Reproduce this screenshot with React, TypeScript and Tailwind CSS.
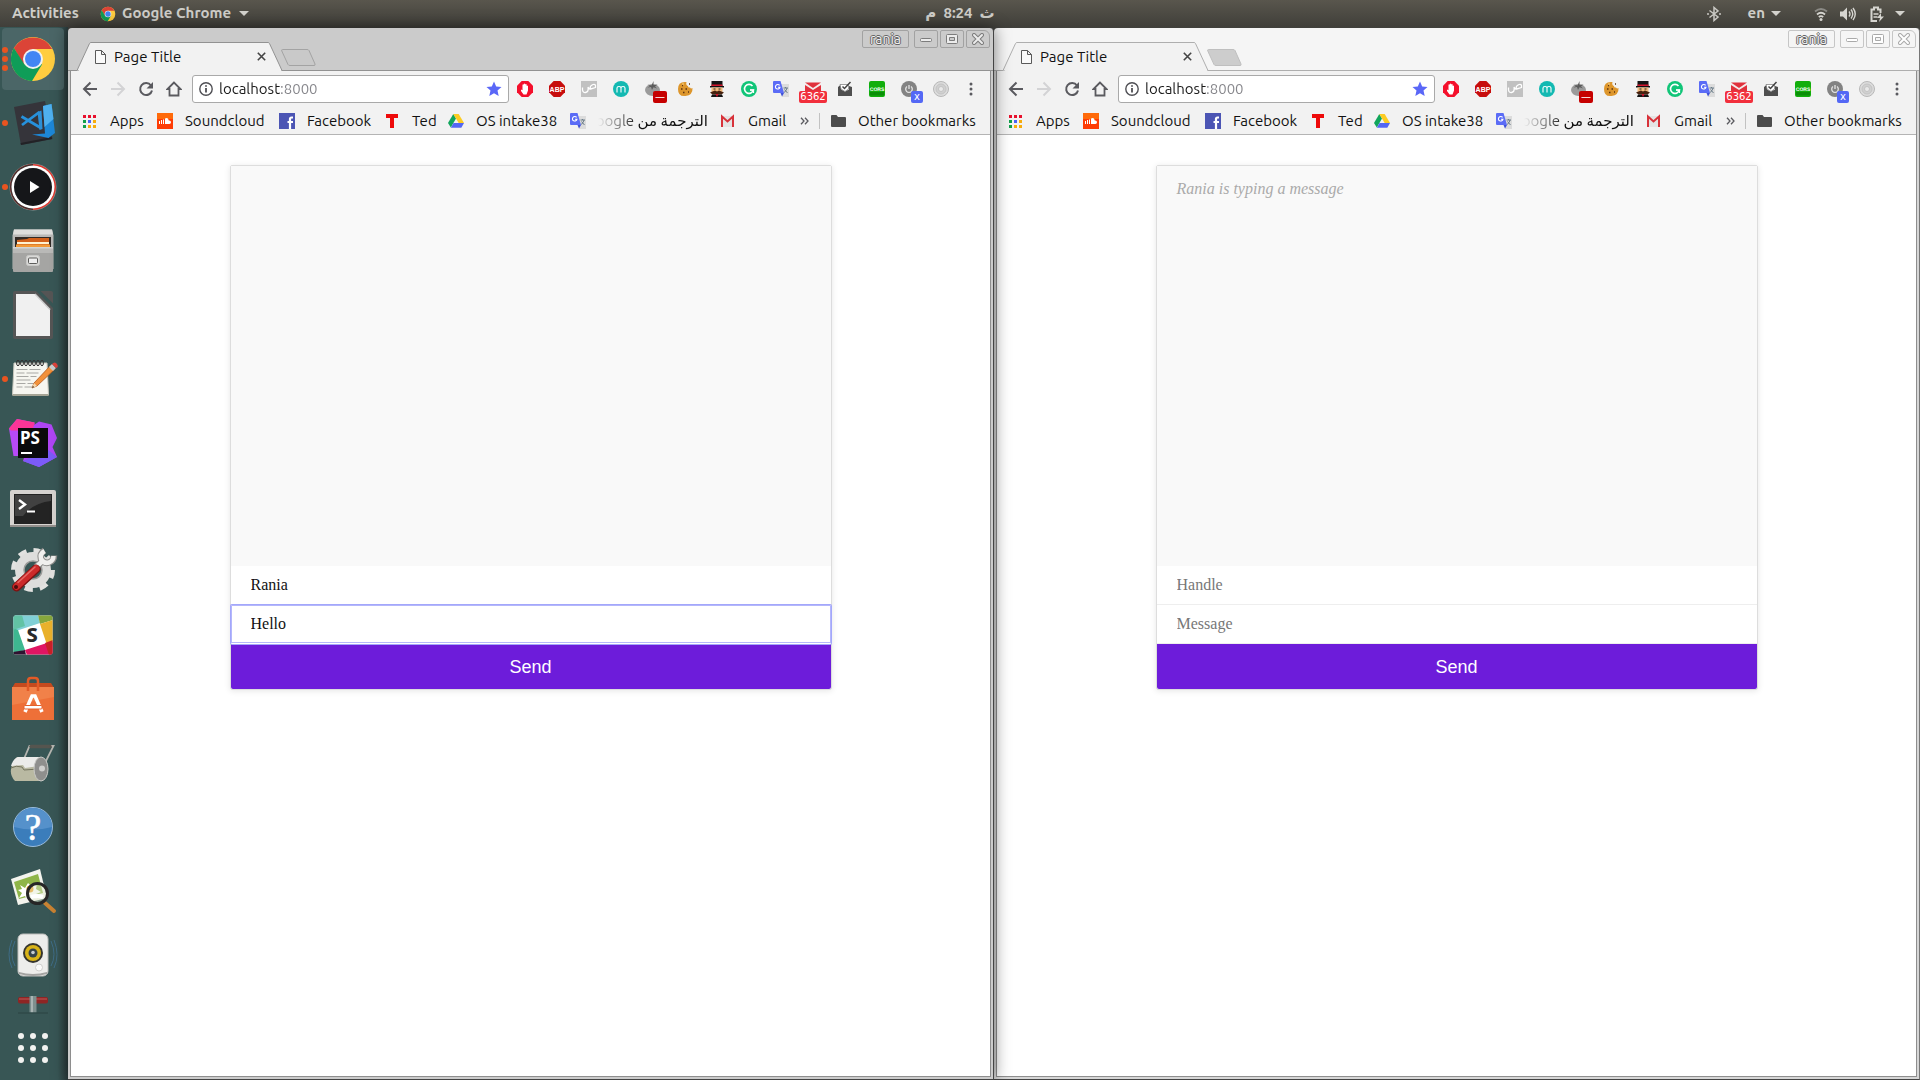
import React, { useState } from "react";

const UI = "font-['Ubuntu','Noto_Sans','DejaVu_Sans',sans-serif]";

/* ---------- shared marks ---------- */

function ChromeMark({ className }: { className?: string }) {
  return (
    <svg viewBox="0 0 48 48" className={className} aria-hidden="true">
      <circle cx="24" cy="24" r="22" fill="#ffcd40" />
      <path d="M4.9 13A22 22 0 0 1 43.1 14H24L14.5 29.5Z" fill="#db4437" />
      <path d="M4.9 13A22 22 0 0 0 23 46L33 29.5 24 24 15.5 29.5Z" fill="#0f9d58" />
      <circle cx="24" cy="24" r="10" fill="#f1f1f1" />
      <circle cx="24" cy="24" r="8" fill="#4285f4" />
    </svg>
  );
}

function Caret() {
  return (
    <svg viewBox="0 0 10 5" className="h-[5px] w-[10px]" aria-hidden="true">
      <path d="M0 0h10L5 5z" fill="#d3d2cd" />
    </svg>
  );
}

function TranslateMark() {
  return (
    <svg viewBox="0 0 16 16" className="size-4" aria-hidden="true">
      <path d="M6 3h10v13H9z" fill="#dcdcdc" />
      <path d="M0 1q0-1 1-1h6.5L11 12H1q-1 0-1-1z" fill="#5b6cf6" />
      <path d="M7.5 12H11l-2 3.5z" fill="#3f51d8" />
      <path d="M6.6 4.400A2.300 2.300 0 1 0 7 6.200H5" fill="none" stroke="#fff" strokeWidth="1.1" />
      <path d="M10.5 7h4.500M12.500 6v1M14 7q-.5 3-3 4.500M11.500 8.500l3 3.500" fill="none" stroke="#6b7d8a" />
    </svg>
  );
}

/* ---------- top panel ---------- */

function TopPanel() {
  return (
    <header className={`grid h-[27px] shrink-0 grid-cols-[1fr_auto_1fr] items-center bg-linear-to-b from-[#59564d] to-[#403f3a] text-[15px] font-semibold text-[#cfcec9] ${UI}`}>
      <div className="flex items-center pl-3">
        <button className="w-[88px] text-left">Activities</button>
        <button className="flex items-center gap-[6px]">
          <ChromeMark className="size-4" />
          <span className="w-[111px] text-left whitespace-nowrap">Google Chrome</span>
          <Caret />
        </button>
      </div>
      <button dir="rtl" className="whitespace-pre">ث  8:24  م</button>
      <div className="flex items-center justify-end pr-[15px]">
        <svg viewBox="0 0 16 16" className="mr-[26px] size-4" aria-label="Bluetooth">
          <path d="M3.500 4.500l8.500 6.500-4 3.500V1.500l4 3.500-8.500 6.500M1 8h2M13 8h2" fill="none" stroke="#c9c8c3" strokeWidth="1.500" />
        </svg>
        <button className="mr-[32px] flex items-center gap-[6px]">
          en <Caret />
        </button>
        <button className="flex items-center" aria-label="System menu">
          <svg viewBox="0 0 16 16" className="mr-[11px] size-4" aria-hidden="true">
            <path d="M2 5.500q6-5 12 0" fill="none" stroke="#8b8a85" strokeWidth="1.800" />
            <path d="M4 8.500q4-3.500 8 0M5.800 11q2.200-1.800 4.400 0" fill="none" stroke="#d6d5d0" strokeWidth="1.800" />
            <circle cx="8" cy="13.500" r="1.500" fill="#d6d5d0" />
          </svg>
          <svg viewBox="0 0 16 16" className="mr-[13px] size-4" aria-hidden="true">
            <path d="M0 5.500h3l4-4v13l-4-4H0z" fill="#d6d5d0" />
            <path d="M9 5.500q2 2.500 0 5M11 3.500q3.500 4.500 0 9M13 2q4.500 6 0 12" fill="none" stroke="#d6d5d0" strokeWidth="1.400" />
          </svg>
          <svg viewBox="0 0 16 16" className="mr-[10px] size-4" aria-hidden="true">
            <path d="M8 15H2.500V3.500H5v-2h4v2h2.500V7" fill="none" stroke="#d6d5d0" strokeWidth="2" />
            <path d="M4.500 8h5M4.500 11h4" stroke="#d6d5d0" strokeWidth="1.600" />
            <path d="M12 7l-4 5h3l-1 4 5-5.500h-3z" fill="#d6d5d0" />
          </svg>
          <Caret />
        </button>
      </div>
    </header>
  );
}

/* ---------- dock ---------- */

const dockApps: { name: string; dots: number; art: React.ReactNode }[] = [
  { name: "Google Chrome", dots: 3, art: <ChromeMark className="size-12" /> },
  {
    name: "Visual Studio Code", dots: 1,
    art: (
      <>
        <path d="M5 8L36 2l7.500 38L12 46z" fill="#35343a" />
        <path d="M43 40l-31 6-.5-2 31-6z" fill="#222226" />
        <path d="M34 7l8.500-2L46 34l-6.500 5L23 35.500l13-1z" fill="#1d87d6" />
        <path d="M34 7l8.500-2 2 15-9 8z" fill="#4fb0ee" />
        <path d="M12.500 17.500L32 29M13 26L30.500 13" stroke="#2691dc" strokeWidth="2.800" />
        <path d="M28.500 13l4-1.500L33.500 30l-3 1z" fill="#2c8fd5" />
      </>
    ),
  },
  {
    name: "Music player", dots: 1,
    art: (
      <>
        <circle cx="24" cy="24" r="23.500" fill="#8d9a99" />
        <circle cx="24" cy="24" r="23" fill="#e0392f" />
        <path d="M24 1a23 23 0 0 0 0 46z" fill="#47302f" />
        <circle cx="24" cy="24" r="21.500" fill="#fff" />
        <circle cx="24" cy="24" r="19" fill="#151619" />
        <path d="M21 18l9.500 6-9.500 6z" fill="#fff" />
      </>
    ),
  },
  {
    name: "Files", dots: 0,
    art: (
      <>
        <path d="M5 2.500h38l1.500 6V42h-41V8.500z" fill="#b9b9b7" />
        <path d="M5 2.500h38l1 5H4z" fill="#dededc" />
        <path d="M6 10h36v10H6z" fill="#312a26" />
        <path d="M8 13l10-1 2-1h20v9H8z" fill="#d2601a" />
        <path d="M8 15h32v2H8z" fill="#fff1cf" />
        <path d="M7 17.500h34V20H7z" fill="#f29a38" />
        <rect x="4" y="20" width="40" height="25" rx="1" fill="#a5a5a3" />
        <path d="M4 20h40v6H4z" fill="#b9b9b7" />
        <path d="M4 20h40v1.500H4z" fill="#d5d5d3" />
        <rect x="17.500" y="28.500" width="13" height="10" rx="2" fill="#d9d9d7" stroke="#c9c9c7" />
        <rect x="19.500" y="31" width="9" height="5.500" rx="1" fill="#eee" stroke="#5d5d5b" />
      </>
    ),
  },
  {
    name: "LibreOffice", dots: 0,
    art: (
      <>
        <path d="M6 0h21l17 17v29q0 2-2 2H6q-2 0-2-2V2q0-2 2-2z" fill="#555" />
        <path d="M7 3h19l15 15.500V45H7z" fill="#f0f0f0" />
        <path d="M26 3l15 15.500" stroke="#ccc" strokeWidth="1.500" />
        <path d="M31.500 0H42q2 0 2 2v10.500z" fill="#555" />
      </>
    ),
  },
  {
    name: "Text editor", dots: 1,
    art: (
      <>
        <path d="M5 8h33l1.500 32H3.500z" fill="#f6f6f0" stroke="#c7c7bd" />
        <path d="M3.500 39h36v2h-36z" fill="#a5a596" />
        <path d="M7.500 14.500h11m2 0h11M7.500 18h8m2 0h12M7.500 21.500h12m2 0h6M7.500 25h14M7.500 28.500h9m2 0h7M7.500 32h6m2 0h8" stroke="#a8a8a4" />
        {[9, 13, 17, 21, 25, 29, 33].map((x) => (
          <ellipse key={x} cx={x} cy="8" rx="1.400" ry="2.800" fill="none" stroke="#333" />
        ))}
        <path d="M23 33l2-5L42 10l4 4-18 17z" fill="#f2913a" stroke="#b2591c" strokeWidth=".8" />
        <path d="M25 28l3 3-5 2z" fill="#f4d9ae" />
        <path d="M40 12l3-3 4 4-3 3z" fill="#c9ccce" />
        <path d="M43 9q3-3 5 0t-1 4z" fill="#e0433c" />
        <path d="M23 33l1-2 1 1z" fill="#222" />
      </>
    ),
  },
  {
    name: "PhpStorm", dots: 0,
    art: (
      <>
        <path d="M0 9.500L8 0l17.500 3.500L22 37H4.500z" fill="#b74af7" />
        <path d="M0 9.500L8 0l17.500 3.500v8H2z" fill="#fb3598" />
        <path d="M25 6l5-3.500 12.500 3L48 19l-4.500 9 4.500 10-18 10-16-6z" fill="#af45f5" />
        <path d="M38 30l10 8-18 10-16-6z" fill="#7b5bf8" />
        <rect x="9" y="9" width="30" height="30" fill="#0a0a0c" />
        <path d="M12 34h11" stroke="#fff" strokeWidth="2" />
        <text x="11" y="25" fill="#fff" fontSize="17" fontWeight="700" fontFamily="'Noto Sans', sans-serif">PS</text>
      </>
    ),
  },
  {
    name: "Terminal", dots: 0,
    art: (
      <>
        <rect x="1" y="7" width="46" height="37" rx="2" fill="#d6d3d0" />
        <path d="M1 42h46v2H1z" fill="#938f8c" />
        <rect x="5" y="11" width="38" height="30" fill="#232323" />
        <path d="M6 12h36v6q-18 2-28 15H6z" fill="#414141" />
        <path d="M10 17l6 4.500-6 4.500" fill="none" stroke="#fff" strokeWidth="2.400" />
        <path d="M18 28.500h8" stroke="#fff" strokeWidth="2" />
      </>
    ),
  },
  {
    name: "Settings", dots: 0,
    art: (
      <>
        <circle cx="24" cy="23" r="19.500" fill="none" stroke="#e2e2e0" strokeWidth="5" strokeDasharray="8.300 7" />
        <circle cx="24" cy="23" r="13.500" fill="none" stroke="#dededc" strokeWidth="9" />
        <circle cx="24" cy="23" r="9" fill="none" stroke="#9a9a98" strokeWidth="1.500" />
        <path d="M27 20l6-5.500M35.500 3.500q-5 3-3.500 8.500 3 5 8 3.500 5-2 5-7" fill="none" stroke="#8c8c8a" strokeWidth="6.500" />
        <path d="M26 21l8-7.500M35.500 4q-5 3-3.500 8 3 5 8 3.500 4.500-2 4.500-6.500" fill="none" stroke="#f0f0ee" strokeWidth="4.500" />
        <path d="M27 22L7.500 40" stroke="#7d1212" strokeWidth="9" strokeLinecap="round" />
        <path d="M27 21.500L7.500 39.500" stroke="#cc2a2a" strokeWidth="7" strokeLinecap="round" />
        <path d="M26 20L9 35.500" stroke="#e66a66" strokeWidth="1.500" strokeLinecap="round" />
        <circle cx="7" cy="40" r="2" fill="#4d0d0d" />
      </>
    ),
  },
  {
    name: "Slack", dots: 0,
    art: (
      <>
        <clipPath id="slackTile"><rect x="4.500" y="4.500" width="39" height="39" rx="2" /></clipPath>
        <g clipPath="url(#slackTile)">
          <rect x="4" y="4" width="40" height="40" fill="#fff" />
          <path d="M4 4h25l2 8-24 8-3-2z" fill="#80d0d6" />
          <path d="M29 4h15v5l-13 4z" fill="#86a63c" />
          <path d="M31 13l13-4v22l-6 3z" fill="#e9b12c" />
          <path d="M4 17l5 2 7 20-12 3z" fill="#3eb890" />
          <path d="M4 4v15l12-4-3-11z" fill="#62c3a5" />
          <path d="M16 39l22-7 6-1v13H18z" fill="#e01563" />
          <path d="M16 39l1 5H4v-3z" fill="#2f1230" />
          <path d="M36 32l8-3v15h-4z" fill="#c92127" />
        </g>
        <text x="17.500" y="31" fill="#2a2a2c" fontSize="20" fontWeight="800" fontFamily="'Noto Sans', sans-serif">S</text>
      </>
    ),
  },
  {
    name: "Ubuntu Software", dots: 0,
    art: (
      <>
        <path d="M6 8h36l3 5H3z" fill="#c54a1e" />
        <path d="M3 12h42v33H3z" fill="#ee7038" />
        <path d="M3 12h42v10L3 30z" fill="#f18149" />
        <path d="M19 16V6q0-3 3-3h4q3 0 3 3v10" fill="none" stroke="#e35a26" strokeWidth="2.500" />
        <path d="M16 37l7-16h3l7 16" fill="none" stroke="#fff" strokeWidth="3.500" />
        <rect x="15" y="30.500" width="18" height="3.500" rx="1" fill="#fff" stroke="#e3602c" />
      </>
    ),
  },
  {
    name: "Disk usage", dots: 0,
    art: (
      <>
        <path d="M14.500 21l6-14h24L33.500 29" fill="none" stroke="#b5b5b0" strokeWidth="1.800" />
        <path d="M22 7.500h19" stroke="#55554f" strokeWidth="3.500" strokeLinecap="round" />
        <path d="M8 18h24v24H6q-5-5-4-12t6-12z" fill="#b9b9a2" />
        <path d="M9 18h23l-2 9-14 2-2-3-12 1q2-7 7-9z" fill="#ececea" />
        <path d="M2 29q5-3 11-1l2 3 15-1" fill="none" stroke="#73735d" />
        <ellipse cx="32" cy="30" rx="7" ry="12" fill="#8f8f8d" stroke="#c9c9c6" />
        <circle cx="33" cy="29.500" r="3" fill="#cfcfcd" />
      </>
    ),
  },
  {
    name: "Help", dots: 0,
    art: (
      <>
        <circle cx="24" cy="24" r="19.500" fill="#3b7dbb" stroke="#9bbcdc" />
        <path d="M5 24a19 19 0 0 1 38 0q-19 5-38 0z" fill="#5591cb" />
        <text x="24" y="37" textAnchor="middle" fill="#fff" stroke="#fff" strokeWidth=".6" fontSize="37" fontFamily="'Liberation Serif', serif">?</text>
      </>
    ),
  },
  {
    name: "Image viewer", dots: 0,
    art: (
      <>
        <path d="M2 12L31 2l7 29-29 7z" fill="#f4f4ee" />
        <path d="M5 15l24-8 5 19-24 6z" fill="#8fb548" />
        <path d="M11 18l5 3 3-5 4 4 5-3-1 5 5 3-5 2 1 5-5-2-4 4-3-5-6 2 3-5-4-3 4-1z" fill="#fff" />
        <circle cx="21" cy="22" r="3.500" fill="#ec9a1d" />
        <path d="M36 36l9 8" stroke="#c98232" strokeWidth="4" strokeLinecap="round" />
        <circle cx="28.500" cy="26.500" r="10" fill="#dfe8cc" fillOpacity=".45" stroke="#262626" strokeWidth="3" />
        <path d="M22 30q6-2 12 0" stroke="#fff" strokeWidth="4" fill="#fff" />
      </>
    ),
  },
  {
    name: "Sound", dots: 0,
    art: (
      <>
        <path d="M6 10q-6 14 0 25M3 9q-6 15 0 28M42 10q6 14 0 25M45 9q6 15 0 28" fill="none" stroke="#3f6c86" />
        <rect x="9" y="3" width="30" height="42" rx="5" fill="#ededeb" stroke="#bdbdbb" />
        <path d="M10 41q14 4 28 0v2q-14 4-28 0z" fill="#a3a3a1" />
        <circle cx="24" cy="22" r="10" fill="#35352f" />
        <circle cx="24" cy="22" r="8" fill="#d8b318" />
        <circle cx="24" cy="22" r="4.500" fill="#34424b" />
        <circle cx="24" cy="21.500" r="1.800" fill="#c5ccd2" />
        <circle cx="30" cy="36.500" r="3.500" fill="#fbfbfa" stroke="#cfcfcd" />
      </>
    ),
  },
];

const dotRows: Record<number, string[]> = { 0: [], 1: ["a"], 3: ["a", "b", "c"] };

function Dock() {
  return (
    <nav aria-label="Dock" className="flex w-[68px] shrink-0 flex-col bg-linear-to-r from-[#385655] from-85% to-[#2b3c3d]">
      {dockApps.map((app, i) => (
        <button key={app.name} aria-label={app.name} className="flex h-16 w-full items-center py-px pl-[2px]">
          <span className={`flex h-[62px] w-[62px] items-center rounded-sm ${i === 0 ? "bg-[#4b6667]" : ""}`}>
            <span className="flex w-[7px] shrink-0 flex-col gap-[3px]">
              {dotRows[app.dots].map((d) => (
                <span key={d} className="size-[6px] rounded-full bg-[#e95420]" />
              ))}
            </span>
            {i === 0 ? app.art : <svg viewBox="0 0 48 48" className="size-12 shrink-0 overflow-visible" aria-hidden="true">{app.art}</svg>}
          </span>
        </button>
      ))}
      <svg viewBox="0 0 48 30" className="ml-[9px] h-[30px] w-12" aria-hidden="true">
        <rect x="9" y="10" width="30" height="6.500" rx="2" fill="#8e2524" />
        <path d="M10 12h28" stroke="#c15b58" />
        <path d="M20.500 9h7v17h-7z" fill="#7d8f8e" />
        <path d="M22 9h2v17h-2z" fill="#a8b4b3" />
        <path d="M9 26h30" fill="none" stroke="#2f4a49" strokeWidth="1.500" />
      </svg>
      <button aria-label="Show Applications" className="mt-auto mb-[17px] ml-[15px] grid w-9 grid-cols-3 justify-items-center gap-y-[6px]">
        {["1", "2", "3", "4", "5", "6", "7", "8", "9"].map((d) => (
          <span key={d} className="size-[6px] rounded-full bg-[#f2f2f0]" />
        ))}
      </button>
    </nav>
  );
}

/* ---------- browser extensions ---------- */

const extensions: { name: string; art: React.ReactNode; badge?: string; badgeStyle?: string }[] = [
  {
    name: "Hand blocker",
    art: (
      <>
        <path d="M4.700 0h6.600L16 4.700v6.600L11.300 16H4.700L0 11.300V4.700z" fill="#f4102c" />
        <path d="M4 8.500l1.500.8V3.800q.7-1 1.300 0V3q.7-1 1.400 0v.5q.8-1 1.500 0V5q.8-1 1.300 0v4.500L9.500 13.500h-3L4 10z" fill="#fff" />
      </>
    ),
  },
  {
    name: "Adblock Plus",
    art: (
      <>
        <path d="M4.700 0h6.600L16 4.700v6.600L11.300 16H4.700L0 11.300V4.700z" fill="#c70d0d" />
        <text x="8" y="10.700" textAnchor="middle" fill="#fff" fontSize="7" fontWeight="700" fontFamily="'Liberation Sans', sans-serif">ABP</text>
      </>
    ),
  },
  {
    name: "Arabic font",
    art: (
      <>
        <rect width="16" height="16" fill="#c1c1c1" />
        <path d="M1.500 6.500q-.5 5.500 3 5T7 6q.5 2.500 2.500 2t5-1.500Q15 2.500 12 3.500T9 7.500" fill="none" stroke="#fff" strokeWidth="1.300" />
      </>
    ),
  },
  {
    name: "Momentum",
    art: (
      <>
        <circle cx="8" cy="8" r="8" fill="#13b9b2" />
        <path d="M4 11.500V7q0-1.500 2-1.500T8 7v4.500M8 7q0-1.500 2-1.500T12 7v4.500" fill="none" stroke="#fff" strokeWidth="1.100" />
      </>
    ),
  },
  {
    name: "Tomato timer", badge: "—", badgeStyle: "left-2 top-[10px] w-[14px] bg-[#c60000]",
    art: (
      <>
        <ellipse cx="7.500" cy="9" rx="7.500" ry="6" fill="#9b9b9b" />
        <path d="M2.500 3.500L6.500 4.500 8.500 0v4l4-.5-2.500 2 2 2-3.500-1.200L7 9 6 6 2.500 6.500 5 5z" fill="#5c5c5c" />
      </>
    ),
  },
  {
    name: "Cookies",
    art: (
      <>
        <path d="M9.500 1Q1 0 1 8t7.500 7T15.500 7q-1.500 1-2.500-.5-2 .5-2-1.500-2.500-1-1.500-4z" fill="#dd962c" />
        <path d="M5 4.500h1M4 8h1.500M8.500 8H10M6 11.500h1.500M11 11h1M12 3h1" stroke="#5c3210" strokeWidth="1.700" />
        <circle cx="6" cy="3" r="1" fill="#f1c06a" />
      </>
    ),
  },
  {
    name: "Masked man",
    art: (
      <>
        <path d="M2.500 0h11v5h-11z" fill="#161616" />
        <path d="M2.500 3.500h11V5h-11z" fill="#d5142b" />
        <path d="M1 5h14v1.500H1z" fill="#111" />
        <path d="M2.500 6.500h11V12h-11z" fill="#f2bb7e" />
        <path d="M4.500 8h2m3 0h2" stroke="#222" />
        <path d="M1 11.500l5-2 2 1 2-1 5 2-2.500 2h-9z" fill="#46220f" />
        <path d="M3 13.500h10l1 2.500H2z" fill="#131313" />
        <path d="M6.500 13h3L8 16z" fill="#d5142b" />
      </>
    ),
  },
  {
    name: "Grammarly",
    art: (
      <>
        <circle cx="8" cy="8" r="8" fill="#11c578" />
        <path d="M11.500 5A4.500 4.500 0 1 0 12.400 9H9" fill="none" stroke="#fff" strokeWidth="1.600" />
        <path d="M9 9h3.500v3" fill="none" stroke="#fff" strokeWidth="1.200" />
      </>
    ),
  },
  { name: "Translate", art: null },
  {
    name: "Mail checker", badge: "6362", badgeStyle: "-left-[6px] top-[10px] w-7 bg-[#f22f3c]",
    art: (
      <>
        <path d="M0 2h16v12H0z" fill="#f3ecec" />
        <path d="M0 1.500h16L8 7z" fill="#e0313c" />
        <path d="M0 10V4l8 5 8-5v6z" fill="#e0313c" />
      </>
    ),
  },
  {
    name: "Inbox",
    art: (
      <>
        <path d="M1 6l3-2.500v5l4 2 4-2V5l3 1v9H1z" fill="#4f4f4f" />
        <path d="M3 3.500h8.500V8L8 10.500 4 8z" fill="#fff" stroke="#777" strokeWidth=".7" />
        <path d="M5.500 5.500l2 2L13.500 1" fill="none" stroke="#444" strokeWidth="1.500" />
      </>
    ),
  },
  {
    name: "CORS",
    art: (
      <>
        <rect width="16" height="16" rx="2" fill="#12ae0c" />
        <path d="M1 11h14v3.500H1z" fill="#0b8e08" />
        <text x="8" y="10" textAnchor="middle" fill="#fff" fontSize="5" fontWeight="700" textRendering="geometricPrecision" fontFamily="'Liberation Sans', sans-serif">CORS</text>
      </>
    ),
  },
  {
    name: "Power", badge: "x", badgeStyle: "left-[10px] top-[10px] w-3 bg-[#5468f5]",
    art: (
      <>
        <circle cx="8" cy="8" r="8" fill="#838383" />
        <path d="M6 5.500a3.300 3.300 0 1 0 4 0M8 4v4" fill="none" stroke="#e5e5e5" strokeWidth="1.300" />
      </>
    ),
  },
  {
    name: "Recorder",
    art: (
      <>
        <circle cx="8" cy="8" r="7.500" fill="#dcdcdc" stroke="#b8b8b8" />
        <circle cx="8" cy="8" r="5" fill="#d0d0d0" stroke="#c4c4c4" />
        <circle cx="8" cy="8" r="2.500" fill="#e9e9e9" stroke="#bdbdbd" strokeWidth=".8" />
      </>
    ),
  },
];

function Extensions() {
  return (
    <div className="flex items-center gap-4">
      {extensions.map((ext) => (
        <button key={ext.name} aria-label={ext.name} className="relative size-4 shrink-0">
          {ext.art ? <svg viewBox="0 0 16 16" className="size-4" aria-hidden="true">{ext.art}</svg> : <TranslateMark />}
          {ext.badge && (
            <span className={`absolute flex h-3 items-center justify-center rounded-[2px] font-['DejaVu_Sans',sans-serif] text-[10px] leading-3 text-white ${ext.badgeStyle}`}>
              {ext.badge}
            </span>
          )}
        </button>
      ))}
      <button aria-label="Menu" className="flex w-3 justify-center">
        <svg viewBox="0 0 4 14" className="h-[14px] w-1" aria-hidden="true">
          <circle cx="2" cy="2" r="1.500" fill="#5a5a5f" />
          <circle cx="2" cy="7" r="1.500" fill="#5a5a5f" />
          <circle cx="2" cy="12" r="1.500" fill="#5a5a5f" />
        </svg>
      </button>
    </div>
  );
}

/* ---------- browser chrome ---------- */

function TitleBar({ active }: { active: boolean }) {
  const line = active ? "#929292" : "#aeaeae";
  const box = active ? "border-[#a2a2a2]" : "border-[#c6c6c6]";
  const fill = active ? "#ececec" : "#ffffff";
  const rim = active ? "#7c7c7c" : "#a9a9a9";
  return (
    <div className="flex h-[43px] shrink-0 items-end justify-between border-b pl-[9px]" style={{ borderColor: line }}>
      <div className="-mb-px flex items-end">
        <div className="relative flex h-[29px] w-[206px] items-center pr-[17px] pl-[18px]">
          <svg viewBox="0 0 206 29" preserveAspectRatio="none" className="absolute inset-0 size-full" aria-hidden="true">
            <path d="M0 28.500L12.500 1.500Q13 .5 14 .5H191Q192 .5 192.500 1.500L205 28.500" fill="#f2f2f2" stroke={line} />
            <path d="M2 28.500H204" stroke="#f2f2f2" strokeWidth="1.200" />
          </svg>
          <svg viewBox="0 0 11 14" className="relative h-[14px] w-[11px]" aria-hidden="true">
            <path d="M.5.500h6l4 4v9H.500zM6.500.500v4h4" fill="#fafafa" stroke="#595959" />
          </svg>
          <span className="relative ml-2 flex-1 text-[15px] leading-5 text-[#111]">Page Title</span>
          <button aria-label="Close tab" className="relative">
            <svg viewBox="0 0 9 9" className="size-[9px]" aria-hidden="true">
              <path d="M.8.800l7.400 7.400M8.200.800L.8 8.200" stroke="#444" strokeWidth="1.600" />
            </svg>
          </button>
        </div>
        <button aria-label="New tab" className="mb-[5px] -ml-[2px]">
          <svg viewBox="0 0 35 17" className="h-[17px] w-[35px]" aria-hidden="true">
            <path d="M1.500.500H26Q27.500.500 28 1.500L34 15q.5 1.500-1 1.500H9Q7.500 16.500 7 15.500L.8 2Q.2.500 1.500.500z" fill={active ? "#c9c9c9" : "#cdcdcd"} stroke={active ? "#a3a3a3" : "#bfbfbf"} />
          </svg>
        </button>
      </div>
      <div className="flex items-center gap-[2px] self-start pt-[2px] pr-[3px]">
        <button className={`mr-[3px] h-[18px] w-[47px] rounded-[2px] border text-sm leading-4 text-[#f0f0f0] [text-shadow:1px_0_#666,-1px_0_#666,0_1px_#666,0_-1px_#666] ${box}`}>
          rania
        </button>
        <button aria-label="Minimize" className={`flex h-[18px] w-6 items-center justify-center rounded-[2px] border ${box}`}>
          <svg viewBox="0 0 12 10" className="h-[10px] w-3" aria-hidden="true">
            <rect x=".5" y="4.500" width="11" height="3" rx="1" fill={fill} stroke={rim} />
          </svg>
        </button>
        <button aria-label="Maximize" className={`flex h-[18px] w-6 items-center justify-center rounded-[2px] border ${box}`}>
          <svg viewBox="0 0 12 10" className="h-[10px] w-3" aria-hidden="true">
            <path fillRule="evenodd" d="M1.500.500h9q1 0 1 1v7q0 1-1 1h-9q-1 0-1-1v-7q0-1 1-1zM3.500 3.500v3h5v-3z" fill={fill} stroke={rim} />
          </svg>
        </button>
        <button aria-label="Close" className={`flex h-[18px] w-6 items-center justify-center rounded-[2px] rounded-tr-md border ${box}`}>
          <svg viewBox="0 0 12 12" className="size-3" aria-hidden="true">
            <path d="M2 2l8 8M10 2l-8 8" stroke={rim} strokeWidth="4" strokeLinecap="round" />
            <path d="M2 2l8 8M10 2l-8 8" stroke={fill} strokeWidth="2" strokeLinecap="round" />
          </svg>
        </button>
      </div>
    </div>
  );
}

function AddressRow() {
  return (
    <div className="flex h-9 items-center pr-[13px] pl-[11px]">
      <div className="flex items-center gap-[12px]">
        <button aria-label="Back">
          <svg viewBox="0 0 16 16" className="size-4" aria-hidden="true">
            <path d="M15 8H2M8.500 1.500L2 8l6.500 6.500" fill="none" stroke="#5a5a5f" strokeWidth="2" />
          </svg>
        </button>
        <button aria-label="Forward">
          <svg viewBox="0 0 16 16" className="size-4" aria-hidden="true">
            <path d="M1 8h13M7.500 1.500L14 8l-6.500 6.500" fill="none" stroke="#d3d3d5" strokeWidth="2" />
          </svg>
        </button>
        <button aria-label="Reload">
          <svg viewBox="0 0 16 16" className="size-4" aria-hidden="true">
            <path d="M13 4.500A6 6 0 1 0 14 9.500" fill="none" stroke="#5a5a5f" strokeWidth="2" />
            <path d="M15 1v6.500H8.500z" fill="#5a5a5f" />
          </svg>
        </button>
        <button aria-label="Home">
          <svg viewBox="0 0 16 16" className="size-4" aria-hidden="true">
            <path d="M8 1.500L1.500 8H3.500v6.500h9V8h2z" fill="none" stroke="#5a5a5f" strokeWidth="1.800" />
          </svg>
        </button>
      </div>
      <div className="mr-2 ml-[10px] flex h-7 min-w-0 flex-1 items-center rounded-[3px] border border-[#a9a9a9] bg-white px-[6px]">
        <svg viewBox="0 0 14 14" className="size-[14px] shrink-0" aria-hidden="true">
          <circle cx="7" cy="7" r="6.200" fill="none" stroke="#4f4f54" strokeWidth="1.400" />
          <path d="M7 6v4.500M7 3.200v1.600" stroke="#4f4f54" strokeWidth="1.800" />
        </svg>
        <input
          aria-label="Address"
          defaultValue="localhost:8000"
          className="ml-[6px] min-w-0 flex-1 bg-[linear-gradient(to_right,#1a1a1a_61px,#85858a_61px)] bg-clip-text text-[15px] text-transparent outline-none"
        />
        <button aria-label="Bookmark this page">
          <svg viewBox="0 0 16 16" className="size-4" aria-hidden="true">
            <path d="M8 .5l2.200 5 5.300.500-4 3.600 1.200 5.400L8 12.200 3.300 15l1.200-5.400-4-3.600 5.300-.5z" fill="#5a67f7" />
          </svg>
        </button>
      </div>
      <Extensions />
    </div>
  );
}

const bookmarks: { label: string; width: string; icon: React.ReactNode }[] = [
  {
    label: "Apps", width: "w-[35px]",
    icon: (
      <svg viewBox="0 0 16 16" className="size-4" aria-hidden="true">
        <path d="M1 2h3v3H1zM6 2h3v3H6zM11 2h3v3h-3z" fill="#e8112d" />
        <path d="M1 7h3v3H1zM1 12h3v3H1z" fill="#12a04b" />
        <path d="M6 7h3v3H6z" fill="#4b62f5" />
        <path d="M11 7h3v3h-3zM6 12h3v3H6zM11 12h3v3h-3z" fill="#f7ac0c" />
      </svg>
    ),
  },
  {
    label: "Soundcloud", width: "w-[82px]",
    icon: (
      <svg viewBox="0 0 16 16" className="size-4" aria-hidden="true">
        <path d="M0 0h16v16H0z" fill="#fe3c05" />
        <path d="M0 0h16v6H0z" fill="#ff6a0a" />
        <path d="M2.500 8v3M4.500 7v4M6.500 6.500V11" stroke="#fff" />
        <path d="M8 5.500q3-1.500 3.800 2 2.200-.3 2.200 1.700T12 11H8z" fill="#fff" />
      </svg>
    ),
  },
  {
    label: "Facebook", width: "w-[65px]",
    icon: (
      <svg viewBox="0 0 16 16" className="size-4" aria-hidden="true">
        <path d="M0 0h16v16H0z" fill="#4c55b4" />
        <path d="M14 4.500h-1.500Q11 4.500 11 6v10M8.500 9H14" fill="none" stroke="#fff" strokeWidth="2.200" />
      </svg>
    ),
  },
  {
    label: "Ted", width: "w-[24px]",
    icon: (
      <svg viewBox="0 0 16 16" className="size-4" aria-hidden="true">
        <path d="M2 1h12v4h-4v10H6V5H2z" fill="#ee0a0a" />
      </svg>
    ),
  },
  {
    label: "OS intake38", width: "w-[82px]",
    icon: (
      <svg viewBox="0 0 16 16" className="size-4" aria-hidden="true">
        <path d="M5.300 1L8 5.500 2.800 14.500 0 10z" fill="#11a55c" />
        <path d="M5.300 1h5.400L16 10h-5.300z" fill="#fccc22" />
        <path d="M5.500 10H16l-2.700 4.700H2.800z" fill="#5367f3" />
      </svg>
    ),
  },
  { label: "الترجمة من Google", width: "w-[110px]", icon: <TranslateMark /> },
  {
    label: "Gmail", width: "w-[40px]",
    icon: (
      <svg viewBox="0 0 16 16" className="size-4" aria-hidden="true">
        <path d="M1 3h13v11H1z" fill="#e4e4e4" />
        <path d="M2 14V3.500l5.500 5 5.500-5V14" fill="none" stroke="#d8323a" strokeWidth="2" />
      </svg>
    ),
  },
];

function BookmarkRow() {
  return (
    <div className="flex h-7 items-center justify-between border-b border-[#b4b4b4] pr-[11px] pl-[11px] text-[15px] leading-[22px] text-[#111]">
      <div className="flex items-center gap-3">
        {bookmarks.map((b) => (
          <a key={b.label} href="#" className="flex items-center gap-3 whitespace-nowrap">
            {b.icon}
            {b.label.startsWith("ا") ? (
              <span dir="rtl" className={`overflow-hidden mask-[linear-gradient(to_right,transparent,black_40px)] ${b.width}`}>{b.label}</span>
            ) : (
              <span className={b.width}>{b.label}</span>
            )}
          </a>
        ))}
      </div>
      <div className="flex items-center">
        <button aria-label="More bookmarks">
          <svg viewBox="0 0 9 8" className="h-2 w-[9px]" aria-hidden="true">
            <path d="M1 .8L4 4 1 7.200M5 .8L8 4 5 7.200" fill="none" stroke="#5a5a5f" strokeWidth="1.300" />
          </svg>
        </button>
        <span className="mr-[11px] ml-[10px] h-4 w-px bg-[#c2c2c2]" />
        <button className="flex items-center gap-3">
          <svg viewBox="0 0 15 12" className="h-3 w-[15px]" aria-hidden="true">
            <path d="M0 1q0-1 1-1h4.500L7 2h7q1 0 1 1v8q0 1-1 1H1q-1 0-1-1z" fill="#4c4c4c" />
          </svg>
          <span className="w-[121px] text-left whitespace-nowrap">Other bookmarks</span>
        </button>
      </div>
    </div>
  );
}

/* ---------- chat page ---------- */

function Chat({ initialHandle, initialMessage, feedback }: { initialHandle: string; initialMessage: string; feedback?: string }) {
  const [handle, setHandle] = useState(initialHandle);
  const [message, setMessage] = useState(initialMessage);
  const composing = message !== "";
  const field = "block h-[39px] w-full bg-white px-5 text-base text-[#111] placeholder-[#777] outline-none";
  return (
    <form
      onSubmit={(e) => e.preventDefault()}
      className="mx-auto mt-[30px] w-full max-w-[602px] rounded-[2px] border border-[#ddd] shadow-[0_1px_6px_rgba(0,0,0,0.1)] font-['Liberation_Serif',serif]"
    >
      <div className="h-[400px] bg-[#f9f9f9]">
        {feedback && <p className="px-5 py-[13px] text-base leading-[19px] text-[#aaa] italic">{feedback}</p>}
      </div>
      <input aria-label="Handle" placeholder="Handle" value={handle} onChange={(e) => setHandle(e.target.value)} className={`border-b border-[#eee] ${field}`} />
      <input
        aria-label="Message"
        placeholder="Message"
        value={message}
        onChange={(e) => setMessage(e.target.value)}
        className={`border-b ${field} ${composing ? "relative z-10 rounded-[1px] border-transparent shadow-[0_0_0_1px_#a3a7fb,inset_0_0_0_1px_#b4b7fb]" : "border-[#eee]"}`}
      />
      <button type="submit" className="block h-[45px] w-full rounded-b-[2px] bg-[#6d1cda] font-['Liberation_Sans',sans-serif] text-lg text-white">
        Send
      </button>
    </form>
  );
}

function BrowserWindow({ name, active, children }: { name: string; active: boolean; children: React.ReactNode }) {
  return (
    <section
      aria-label={name}
      className={`mt-px flex min-w-0 flex-1 flex-col rounded-t-[4px] border-b border-b-[#444] ${active ? "z-10 border-r border-r-[#444] bg-[#cbcbcb] shadow-[0_0_16px_rgba(0,0,0,0.5)]" : "border-r border-r-[#777] bg-[#f5f5f5]"}`}
    >
      <TitleBar active={active} />
      <div className={`flex flex-1 flex-col border-x-2 border-b-2 ${active ? "border-[#cbcbcb]" : "border-[#d6d6d6]"}`}>
        <div className="flex flex-1 flex-col border border-t-0 border-[#8e8e8e] bg-white">
          <div className="bg-[#f2f2f2]">
            <AddressRow />
            <BookmarkRow />
          </div>
          <div className="flex-1">{children}</div>
        </div>
      </div>
    </section>
  );
}

export default function App() {
  return (
    <div className={`flex min-h-screen flex-col bg-[#40403c] ${UI}`}>
      <TopPanel />
      <main className="flex flex-1">
        <Dock />
        <BrowserWindow name="Rania's chat" active>
          <Chat initialHandle="Rania" initialMessage="Hello" />
        </BrowserWindow>
        <BrowserWindow name="Guest chat" active={false}>
          <Chat initialHandle="" initialMessage="" feedback="Rania is typing a message" />
        </BrowserWindow>
      </main>
    </div>
  );
}
